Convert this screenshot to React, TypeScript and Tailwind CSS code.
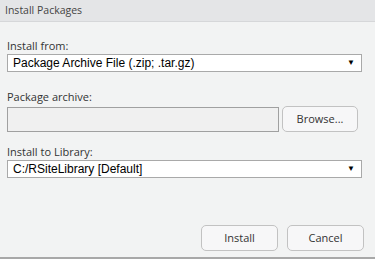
import React from 'react';

const ui = { fontFamily: '"Open Sans", "Noto Sans", sans-serif' };
const arial = { fontFamily: '"Liberation Sans", Arial, sans-serif' };

function Select({ value }: { value: string }) {
  return (
    <div
      className="flex h-[18px] items-center justify-between border border-[#a9a9a9] bg-white pl-[5px] pr-[6px] text-[12px] leading-none text-black"
      style={arial}
    >
      <span className="whitespace-nowrap">{value}</span>
      <span className="text-[8px]">▼</span>
    </div>
  );
}

export default function App() {
  return (
    <div className="flex h-[259px] w-[375px] flex-col bg-[#f2f3f3]" style={ui}>
      <div className="flex h-[22px] items-center border-b border-[#d6d7d9] bg-[#e4e5e7] pl-[5px] text-[10.5px] text-[#444]">
        Install Packages
      </div>

      <div className="flex flex-1 flex-col px-[7px] pt-[16px] pr-[13px]">
        <label className="text-[11px] leading-[16px] text-[#333]">Install from:</label>
        <Select value="Package Archive File (.zip; .tar.gz)" />

        <label className="mt-[17px] text-[11px] leading-[16px] text-[#333]">Package archive:</label>
        <div className="mt-[1px] flex items-center gap-[3px]">
          <div className="h-[25px] w-[272px] border border-[#a0a0a0] bg-[#f0f0f0]" />
          <button className="h-[26px] w-[76px] rounded-[5px] border border-[#c2c2c2] bg-[#f7f7f8] text-[11px] text-[#333]">
            Browse...
          </button>
        </div>

        <label className="mt-[12px] text-[11px] leading-[16px] text-[#333]">Install to Library:</label>
        <Select value="C:/RSiteLibrary [Default]" />

        <div className="mt-auto mb-[6px] flex justify-end gap-[9px]">
          <button className="h-[26px] w-[77px] rounded-[5px] border border-[#c2c2c2] bg-[#f7f7f8] text-[11px] text-[#333]">
            Install
          </button>
          <button className="mr-[-2px] h-[26px] w-[77px] rounded-[5px] border border-[#c2c2c2] bg-[#f7f7f8] text-[11px] text-[#333]">
            Cancel
          </button>
        </div>
      </div>
      <div className="h-[2px] bg-[#a8a8a8]" />
    </div>
  );
}
